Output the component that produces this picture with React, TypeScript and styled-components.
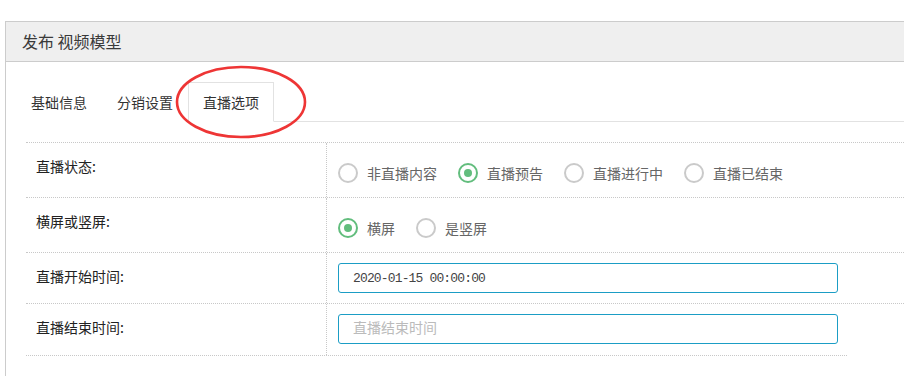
import styled, { createGlobalStyle } from 'styled-components';

const GlobalStyle = createGlobalStyle`
  html, body {
    margin: 0;
    overflow: hidden;
    background: #fff;
    font-family: "Noto Sans CJK SC", "Noto Sans", sans-serif;
  }
`;

const tabs = ['基础信息', '分销设置', '直播选项'];

const statusOptions = [
  { label: '非直播内容', checked: false },
  { label: '直播预告', checked: true },
  { label: '直播进行中', checked: false },
  { label: '直播已结束', checked: false },
];

const screenOptions = [
  { label: '横屏', checked: true },
  { label: '是竖屏', checked: false },
];

function RadioGroup({ options }: { options: { label: string; checked: boolean }[] }) {
  return (
    <Radios>
      {options.map((o) => (
        <RadioItem key={o.label}>
          <Circle $checked={o.checked} />
          {o.label}
        </RadioItem>
      ))}
    </Radios>
  );
}

export default function App() {
  return (
    <>
      <GlobalStyle />
      <Page>
        <Panel>
          <PanelHeader>发布 视频模型</PanelHeader>
          <PanelBody>
            <TabBar>
              {tabs.map((t, i) => (
                <Tab key={t} $active={i === 2}>
                  {t}
                </Tab>
              ))}
              <Highlight width="140" height="80" viewBox="0 0 140 80">
                <ellipse cx="70" cy="40" rx="64" ry="35" fill="none" stroke="#ee3535" strokeWidth="2.6" />
              </Highlight>
            </TabBar>

            <Form>
              <Row>
                <Label>直播状态:</Label>
                <Value $pad="20px 11px 14px">
                  <RadioGroup options={statusOptions} />
                </Value>
              </Row>
              <Row>
                <Label>横屏或竖屏:</Label>
                <Value $pad="20px 11px 14px">
                  <RadioGroup options={screenOptions} />
                </Value>
              </Row>
              <Row>
                <Label>直播开始时间:</Label>
                <Value $pad="10px 11px">
                  <TextInput readOnly defaultValue="2020-01-15 00:00:00" />
                </Value>
              </Row>
              <Row>
                <Label>直播结束时间:</Label>
                <Value $pad="10px 11px 11px">
                  <TextInput readOnly placeholder="直播结束时间" />
                </Value>
              </Row>
            </Form>
          </PanelBody>
        </Panel>
      </Page>
    </>
  );
}

const Page = styled.div`
  padding: 21px 0 0 5px;
`;

const Panel = styled.div`
  width: 940px;
  min-height: 380px;
  border: 1px solid #cccccc;
  border-right: none;
`;

const PanelHeader = styled.div`
  height: 39px;
  line-height: 39px;
  padding: 0 16px;
  background: #efefef;
  border-bottom: 1px solid #cccccc;
  font-size: 16px;
  color: #3a3a3a;
`;

const PanelBody = styled.div`
  padding: 20px 10px 0;
`;

const TabBar = styled.div`
  position: relative;
  display: flex;
  border-bottom: 1px solid #e2e2e2;
`;

const Tab = styled.div<{ $active?: boolean }>`
  padding: 9px 14px;
  line-height: 20px;
  font-size: 14px;
  color: #333;
  margin-bottom: -1px;
  border: 1px solid ${(p) => (p.$active ? '#e2e2e2' : 'transparent')};
  border-bottom-color: ${(p) => (p.$active ? '#fff' : 'transparent')};
  background: #fff;
`;

const Highlight = styled.svg`
  position: absolute;
  left: 155px;
  top: -20px;
  pointer-events: none;
`;

const Form = styled.div`
  width: 821px;
  margin: 20px 0 0 10px;
  border-bottom: 1px dotted #c8c8c8;
`;

const Row = styled.div`
  display: grid;
  grid-template-columns: 300px 1fr;
  width: 900px;
  border-top: 1px dotted #c8c8c8;
`;

const Label = styled.div`
  padding: 13px 10px;
  line-height: 20px;
  font-size: 14px;
  color: #222;
`;

const Value = styled.div<{ $pad: string }>`
  padding: ${(p) => p.$pad};
  border-left: 1px dotted #c8c8c8;
`;

const Radios = styled.div`
  display: flex;
  align-items: center;
  height: 20px;
`;

const RadioItem = styled.label`
  display: inline-flex;
  align-items: center;
  margin-right: 21px;
  font-size: 14px;
  line-height: 20px;
  color: #666;
`;

const Circle = styled.span<{ $checked?: boolean }>`
  box-sizing: border-box;
  width: 20px;
  height: 20px;
  margin-right: 9px;
  border-radius: 50%;
  border: 2px solid ${(p) => (p.$checked ? '#62bd7d' : '#cacaca')};
  display: flex;
  align-items: center;
  justify-content: center;

  &::after {
    content: '';
    display: ${(p) => (p.$checked ? 'block' : 'none')};
    width: 8px;
    height: 8px;
    border-radius: 50%;
    background: #62bd7d;
  }
`;

const TextInput = styled.input`
  box-sizing: border-box;
  display: block;
  width: 500px;
  height: 30px;
  padding: 0 14px;
  border: 1px solid #1b9dc5;
  border-radius: 3px;
  outline: none;
  font-family: "Liberation Mono", monospace;
  font-size: 13px;
  letter-spacing: -0.85px;
  color: #444;

  &::placeholder {
    font-family: "Noto Sans CJK SC", sans-serif;
    font-size: 14px;
    letter-spacing: 0;
    color: #bbbbbb;
  }
`;
